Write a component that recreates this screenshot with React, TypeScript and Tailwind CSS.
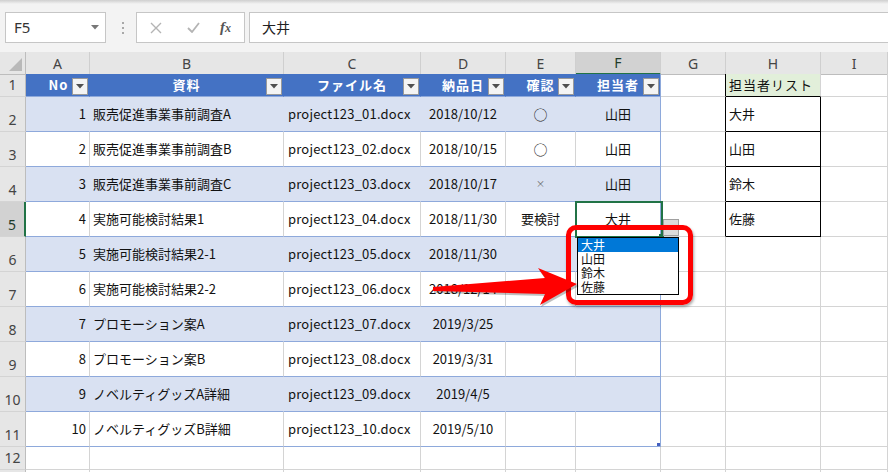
import React from 'react';
import clsx from 'clsx';

interface DataRow {
  no: number;
  name: string;
  file: string;
  date: string;
  check: string;
  person: string;
}

const rows: DataRow[] = [
  { no: 1, name: '販売促進事業事前調査A', file: 'project123_01.docx', date: '2018/10/12', check: '○', person: '山田' },
  { no: 2, name: '販売促進事業事前調査B', file: 'project123_02.docx', date: '2018/10/15', check: '○', person: '山田' },
  { no: 3, name: '販売促進事業事前調査C', file: 'project123_03.docx', date: '2018/10/17', check: '×', person: '山田' },
  { no: 4, name: '実施可能検討結果1', file: 'project123_04.docx', date: '2018/11/30', check: '要検討', person: '大井' },
  { no: 5, name: '実施可能検討結果2-1', file: 'project123_05.docx', date: '2018/11/30', check: '', person: '' },
  { no: 6, name: '実施可能検討結果2-2', file: 'project123_06.docx', date: '2018/12/14', check: '', person: '' },
  { no: 7, name: 'プロモーション案A', file: 'project123_07.docx', date: '2019/3/25', check: '', person: '' },
  { no: 8, name: 'プロモーション案B', file: 'project123_08.docx', date: '2019/3/31', check: '', person: '' },
  { no: 9, name: 'ノベルティグッズA詳細', file: 'project123_09.docx', date: '2019/4/5', check: '', person: '' },
  { no: 10, name: 'ノベルティグッズB詳細', file: 'project123_10.docx', date: '2019/5/10', check: '', person: '' },
];

const staffList = ['大井', '山田', '鈴木', '佐藤'];
const columns = ['A', 'B', 'C', 'D', 'E', 'F', 'G', 'H', 'I'];

const GRID = 'grid grid-cols-[26px_64px_194px_137px_85px_70px_85px_65px_95px_1fr]';
const FONT = "font-['Noto_Sans_CJK_JP',sans-serif]";

const Cell: React.FC<{ className?: string; children?: React.ReactNode }> = ({ className, children }) => (
  <div className={clsx('relative flex items-center overflow-visible whitespace-nowrap border-r border-b', className)}>
    {children}
  </div>
);

const FilterButton = () => (
  <div className="absolute right-[1px] top-[4px] flex h-[17px] w-[16px] items-center justify-center border border-[#9A9A9A] bg-[#F4F4F4]">
    <svg width="8" height="5" viewBox="0 0 8 5">
      <path d="M0 0 L8 0 L4 4.5 Z" fill="#505050" />
    </svg>
  </div>
);

const RowHeader: React.FC<{ n?: number; selected?: boolean }> = ({ n, selected }) => (
  <div
    className={clsx(
      "flex items-end justify-center border-b border-b-[#D4D4D4] pb-[3px] font-['Noto_Sans',sans-serif] text-[14px] leading-[16px]",
      selected
        ? 'border-r-2 border-r-[#217346] bg-[#D2D2D2] text-[#1f3b2a]'
        : 'border-r border-r-[#BDBDBD] bg-[#E6E6E6] text-[#444]'
    )}
  >
    {n}
  </div>
);

const TopBar = () => (
  <div className="h-[52px] bg-[#F3F3F3]">
    <div className="h-[4px] bg-gradient-to-b from-[#CFCFCF] to-[#F3F3F3]" />
    <div className="flex pl-[5px] pt-[8px]">
      <div className="flex h-[31px] w-[101px] items-center justify-between border border-[#C6C6C6] bg-white pl-[8px] pr-[6px]">
        <span className="font-['Noto_Sans',sans-serif] text-[15px] text-[#333]">F5</span>
        <svg width="8" height="5" viewBox="0 0 8 5">
          <path d="M0 0 L8 0 L4 4.5 Z" fill="#777" />
        </svg>
      </div>
      <div className="ml-[16px] mr-[12px] flex flex-col justify-center gap-[3px]">
        <div className="h-[2px] w-[2px] bg-[#A8A8A8]" />
        <div className="h-[2px] w-[2px] bg-[#A8A8A8]" />
        <div className="h-[2px] w-[2px] bg-[#A8A8A8]" />
      </div>
      <div className="flex h-[31px] w-[109px] items-center border border-[#C6C6C6] bg-white">
        <svg className="ml-[13px]" width="12" height="12" viewBox="0 0 12 12">
          <path d="M1 1 L11 11 M11 1 L1 11" stroke="#B4B4B4" strokeWidth="1.4" />
        </svg>
        <svg className="ml-[25px]" width="13" height="11" viewBox="0 0 13 11">
          <path d="M1 6 L5 10 L12 1" stroke="#B4B4B4" strokeWidth="1.8" fill="none" />
        </svg>
        <span className="ml-[20px] font-['Liberation_Serif',serif] text-[15px] font-bold italic text-[#555]">
          f<span className="text-[12px]">x</span>
        </span>
      </div>
      <div className={clsx('ml-[4px] flex h-[31px] flex-1 items-center border border-r-0 border-[#C6C6C6] bg-white pl-[12px] text-[14px] text-[#222]', FONT)}>
        大井
      </div>
    </div>
  </div>
);

export default function App() {
  return (
    <div className={clsx('relative h-[472px] w-[888px] overflow-hidden bg-white text-[13px] text-[#111]', FONT)}>
      <TopBar />

      {/* 列見出し */}
      <div className={clsx(GRID, 'h-[22px]')}>
        <div className="relative border-r border-b border-r-[#BDBDBD] border-b-[#BDBDBD] bg-[#E6E6E6]">
          <svg className="absolute bottom-[3px] right-[3px]" width="13" height="13" viewBox="0 0 13 13">
            <path d="M13 0 L13 13 L0 13 Z" fill="#B9B9B9" />
          </svg>
        </div>
        {columns.map((c) => (
          <div
            key={c}
            className={clsx(
              "flex items-center justify-center border-r border-r-[#CFCFCF] font-['Noto_Sans',sans-serif] text-[14px]",
              c === 'F'
                ? 'border-b-2 border-b-[#217346] bg-[#D2D2D2] text-[#1f3b2a]'
                : 'border-b border-b-[#BDBDBD] bg-[#E6E6E6] text-[#444]'
            )}
          >
            {c}
          </div>
        ))}
      </div>

      {/* 1行目：テーブル見出し */}
      <div className={clsx(GRID, 'h-[23px]')}>
        <RowHeader n={1} />
        {['No', '資料', 'ファイル名', '納品日', '確認', '担当者'].map((h, i) => (
          <Cell
            key={h}
            className={clsx(
              'justify-center bg-[#4472C4] font-bold tracking-[1px] text-white border-b-[#8EA9DB]',
              i === 5 ? 'border-r-[#8EA9DB]' : 'border-r-[#4472C4]'
            )}
          >
            <span className={i === 0 ? 'mr-[-2px]' : ''}>{h}</span>
            <FilterButton />
          </Cell>
        ))}
        <Cell className="border-r-black border-b-[#D4D4D4]" />
        <Cell className="bg-[#E2EFDA] pl-[3px] tracking-[1px] border-r-[#D4D4D4] border-b-black">担当者リスト</Cell>
        <Cell className="border-r-[#D4D4D4] border-b-[#D4D4D4]" />
      </div>

      {/* 2〜11行目 */}
      {rows.map((r, i) => {
        const rowNum = i + 2;
        const banded = i % 2 === 0;
        const inner = banded ? 'bg-[#D9E1F2] border-r-[#D9E1F2]' : 'bg-white border-r-[#D4D4D4]';
        const staff = rowNum <= 5 ? staffList[rowNum - 2] : null;
        return (
          <div key={r.no} className={clsx(GRID, 'h-[35px]')}>
            <RowHeader n={rowNum} selected={rowNum === 5} />
            <Cell className={clsx(inner, 'justify-end pr-[3px] border-b-[#8EA9DB]')}>{r.no}</Cell>
            <Cell className={clsx(inner, 'pl-[3px] border-b-[#8EA9DB]')}>{r.name}</Cell>
            <Cell className={clsx(inner, 'pl-[4px] tracking-[0.2px] border-b-[#8EA9DB]')}>{r.file}</Cell>
            <Cell className={clsx(inner, 'justify-center border-b-[#8EA9DB]')}>{r.date}</Cell>
            <Cell className={clsx(inner, 'justify-center border-b-[#8EA9DB]')}>
              {r.check === '×' ? (
                <span className="text-[9px] text-[#666]">×</span>
              ) : r.check === '○' ? (
                <span className="text-[14px] text-[#222]">○</span>
              ) : (
                r.check
              )}
            </Cell>
            <Cell className={clsx(banded ? 'bg-[#D9E1F2]' : 'bg-white', 'justify-center border-r-[#8EA9DB] border-b-[#8EA9DB]')}>
              {r.person}
            </Cell>
            <Cell className={clsx(staff ? 'border-r-black' : 'border-r-[#D4D4D4]', 'border-b-[#D4D4D4]')} />
            <Cell className={clsx('pl-[3px]', staff ? 'border-r-black border-b-black' : 'border-r-[#D4D4D4] border-b-[#D4D4D4]')}>
              {staff}
            </Cell>
            <Cell className="border-r-[#D4D4D4] border-b-[#D4D4D4]" />
          </div>
        );
      })}

      {/* 12行目（13行目は画面外） */}
      {[12, 0].map((n) => (
        <div key={n} className={clsx(GRID, 'h-[23px]')}>
          <RowHeader n={n || undefined} />
          {columns.map((c) => (
            <Cell key={c} className="border-r-[#D4D4D4] border-b-[#D4D4D4]" />
          ))}
        </div>
      ))}

      {/* 選択セル F5 */}
      <div className="absolute left-[575px] top-[201px] h-[37px] w-[88px] border-2 border-[#217346]" />
      <div className="absolute left-[659px] top-[234px] h-[5px] w-[5px] bg-[#217346]" />

      {/* テーブル右下のサイズ変更ハンドル */}
      <div className="absolute left-[657px] top-[443px] h-[3px] w-[3px] bg-[#4460C0]" />

      {/* 入力規則のドロップダウン */}
      <div className="absolute left-[663px] top-[219px] h-[17px] w-[16px] border border-[#A0A0A0] bg-[#DCDCDC]" />
      <div className="absolute left-[577px] top-[237px] w-[102px] border border-black bg-white text-[12px] leading-[14px]">
        {staffList.map((s, i) => (
          <div key={s} className={clsx('h-[14px] pl-[3px]', i === 0 ? 'bg-[#0078D7] text-white' : 'text-[#111]')}>
            {s}
          </div>
        ))}
      </div>

      {/* 赤枠 */}
      <div className="absolute left-[566px] top-[225px] h-[80px] w-[127px] rounded-[10px] border-[5px] border-[#FF0000] shadow-[1px_2px_3px_rgba(0,0,0,0.35)]" />

      {/* 赤矢印 */}
      <svg className="pointer-events-none absolute left-0 top-0" width="888" height="472" viewBox="0 0 888 472">
        <polygon
          points="434,289 546,280 539,270 579,286 541,307 546,296 434,293"
          fill="rgba(0,0,0,0.25)"
        />
        <polygon points="433,287 545,278 538,268 577,284 540,305 545,294 433,291" fill="#FF0000" />
      </svg>
    </div>
  );
}
